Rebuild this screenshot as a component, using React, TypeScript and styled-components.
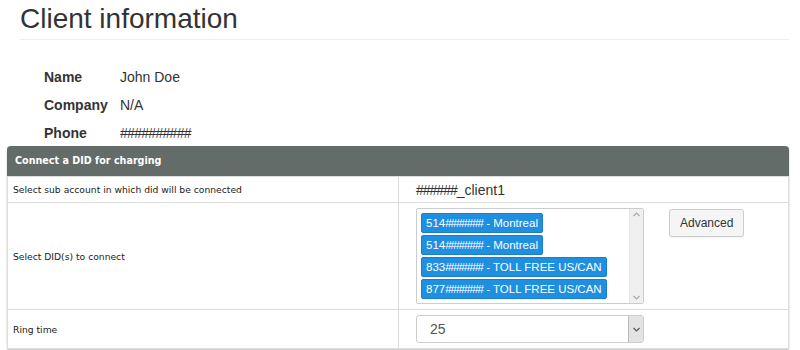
import React from 'react';
import styled, { createGlobalStyle } from 'styled-components';

const GlobalStyle = createGlobalStyle`
  body {
    margin: 0;
    background: #fff;
    font-family: "Liberation Sans", Arial, sans-serif;
    color: #333;
  }
`;

const Page = styled.div`
  width: 800px;
  height: 350px;
  overflow: hidden;
  padding: 0 11px 0 7px;
  box-sizing: border-box;
`;

const Title = styled.h1`
  margin: 0 0 0 13px;
  padding: 5px 0 6px;
  font-size: 28px;
  font-weight: normal;
  line-height: 28px;
  color: #333;
  border-bottom: 1px solid #eee;
`;

const InfoList = styled.dl`
  display: grid;
  grid-template-columns: 76px auto;
  row-gap: 12px;
  margin: 29px 0 5px 37px;
  font-size: 14px;
  line-height: 16px;
`;

const Label = styled.dt`
  font-weight: bold;
  color: #333;
`;

const Value = styled.dd`
  margin: 0;
  color: #333;
`;

// the reference font draws '#' narrower than Arial does
const Hash = styled.span<{ $tight?: number }>`
  letter-spacing: ${p => p.$tight ?? -0.7}px;
`;

const Panel = styled.div`
  border: 1px solid #ddd;
  border-top: none;
  border-radius: 4px 4px 0 0;
  box-shadow: 0 1px 2px rgba(0, 0, 0, 0.25);
`;

const PanelHeader = styled.div`
  background: #646c6a;
  color: #fff;
  font-family: "DejaVu Sans", Verdana, sans-serif;
  font-size: 9.6px;
  font-weight: bold;
  height: 30px;
  line-height: 30px;
  padding: 0 8px;
  border-radius: 4px 4px 0 0;
  margin: 0 -1px;
`;

const Row = styled.div<{ $h: number }>`
  display: grid;
  grid-template-columns: 391px 1fr;
  min-height: ${p => p.$h}px;
  border-top: 1px solid #ddd;
  &:first-of-type {
    border-top: none;
  }
`;

const RowLabel = styled.div`
  display: flex;
  align-items: center;
  padding: 0 5px;
  font-family: "DejaVu Sans", Verdana, sans-serif;
  font-size: 9.2px;
  color: #222;
  border-right: 1px solid #ddd;
`;

const RowValue = styled.div<{ $align?: string; $pad?: number }>`
  display: flex;
  align-items: ${p => p.$align || 'center'};
  gap: 25px;
  padding: ${p => p.$pad ?? 5}px 17px;
  font-size: 14px;
  color: #333;
`;

const ListBox = styled.div`
  width: 228px;
  height: 96px;
  box-sizing: border-box;
  border: 1px solid #ccc;
  border-radius: 2px;
  display: flex;
`;

const Options = styled.div`
  flex: 1;
  display: flex;
  flex-direction: column;
  align-items: flex-start;
  gap: 2px;
  padding: 4px 4px;
`;

const Option = styled.div`
  background: #1e8fe1;
  border: 1px solid #1a7fc8;
  border-radius: 2px;
  color: #fff;
  font-size: 11.5px;
  line-height: 18px;
  padding: 0 4px;
  white-space: nowrap;
`;

const ScrollBar = styled.div`
  width: 13px;
  background: #f0f0f0;
  border-left: 1px solid #e6e6e6;
  display: flex;
  flex-direction: column;
  justify-content: space-between;
  align-items: center;
  padding: 3px 0;
  color: #aaa;
`;

const Button = styled.button`
  font-family: "Liberation Sans", Arial, sans-serif;
  font-size: 12px;
  color: #333;
  background: #f5f5f5;
  border: 1px solid #ccc;
  border-radius: 3px;
  height: 28px;
  padding: 0 10px;
  margin-top: 1px;
  box-shadow: 0 1px 1px rgba(0, 0, 0, 0.05);
`;

const Select = styled.div`
  width: 228px;
  height: 28px;
  box-sizing: border-box;
  border: 1px solid #ccc;
  border-radius: 3px;
  display: flex;
  align-items: center;
  font-size: 14px;
  color: #555;
`;

const SelectText = styled.span`
  flex: 1;
  padding-left: 13px;
`;

const SelectArrow = styled.span`
  width: 14px;
  height: 100%;
  background: #e3e3e3;
  border-left: 1px solid #bbb;
  border-radius: 0 2px 2px 0;
  display: flex;
  align-items: center;
  justify-content: center;
`;

const Chevron: React.FC<{ up?: boolean; color?: string }> = ({ up, color = '#aaa' }) => (
  <svg width="7" height="5" viewBox="0 0 7 5">
    <path
      d={up ? 'M0.5 4 L3.5 1 L6.5 4' : 'M0.5 1 L3.5 4 L6.5 1'}
      fill="none"
      stroke={color}
      strokeWidth="1.2"
    />
  </svg>
);

const dids = [
  ['514', ' - Montreal'],
  ['514', ' - Montreal'],
  ['833', ' - TOLL FREE US/CAN'],
  ['877', ' - TOLL FREE US/CAN'],
];

export default function App() {
  return (
    <Page>
      <GlobalStyle />
      <Title>Client information</Title>
      <InfoList>
        <Label>Name</Label>
        <Value>John Doe</Value>
        <Label>Company</Label>
        <Value>N/A</Value>
        <Label>Phone</Label>
        <Value>
          <Hash>##########</Hash>
        </Value>
      </InfoList>
      <Panel>
        <PanelHeader>Connect a DID for charging</PanelHeader>
        <Row $h={25}>
          <RowLabel>Select sub account in which did will be connected</RowLabel>
          <RowValue $pad={0}>
            <span>
              <Hash $tight={-1}>######</Hash>_client1
            </span>
          </RowValue>
        </Row>
        <Row $h={106}>
          <RowLabel>Select DID(s) to connect</RowLabel>
          <RowValue $align="flex-start">
            <ListBox>
              <Options>
                {dids.map(([pre, rest], i) => (
                  <Option key={i}>
                    {pre}
                    <Hash $tight={-1}>#######</Hash>
                    {rest}
                  </Option>
                ))}
              </Options>
              <ScrollBar>
                <Chevron up />
                <Chevron />
              </ScrollBar>
            </ListBox>
            <Button>Advanced</Button>
          </RowValue>
        </Row>
        <Row $h={38}>
          <RowLabel>Ring time</RowLabel>
          <RowValue>
            <Select>
              <SelectText>25</SelectText>
              <SelectArrow>
                <Chevron color="#555" />
              </SelectArrow>
            </Select>
          </RowValue>
        </Row>
      </Panel>
    </Page>
  );
}
